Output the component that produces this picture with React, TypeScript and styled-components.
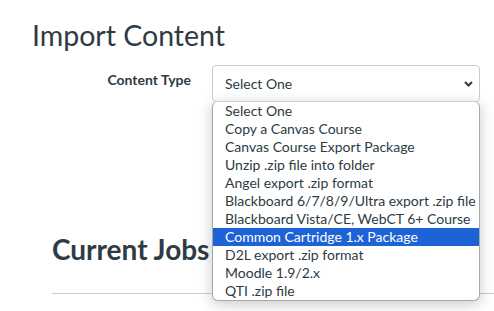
import React from 'react';
import styled, { createGlobalStyle } from 'styled-components';

const GlobalStyle = createGlobalStyle`
  html, body {
    margin: 0;
    padding: 0;
    background: #fff;
    font-family: Lato, "Helvetica Neue", Arial, sans-serif;
    color: #2d3b45;
    overflow: hidden;
  }
`

const Page = styled.div`
  width: 494px;
  height: 311px;
  position: relative;
  overflow: hidden;
`

const Title = styled.h1`
  margin: 0;
  padding: 17px 0 0 32px;
  font-size: 28.5px;
  font-weight: 400;
  line-height: 36px;
  letter-spacing: 0;
`

const FormRow = styled.div`
  display: flex;
  align-items: flex-start;
  margin-top: 12px;
`

const Label = styled.label`
  width: 191px;
  text-align: right;
  font-size: 14px;
  font-weight: 700;
  line-height: 18px;
  padding-top: 6px;
  box-sizing: border-box;
`

const SelectWrap = styled.div`
  position: relative;
  margin-left: 21px;
`

const SelectBox = styled.div`
  width: 268px;
  height: 37px;
  box-sizing: border-box;
  border: 1px solid #c7cdd1;
  border-radius: 4px;
  display: flex;
  align-items: center;
  justify-content: space-between;
  padding: 0 6px 1px 12px;
  font-size: 14px;
`

const Chevron = styled.svg`
  width: 9px;
  height: 6px;
  margin-top: 1px;
`

const Options = styled.ul`
  position: absolute;
  top: 36px;
  left: 0;
  width: 268px;
  margin: 0;
  padding: 0;
  list-style: none;
  background: #fff;
  border: 1px solid #a9a9a9;
  border-top-color: #d0d0d0;
  border-radius: 6px;
  box-sizing: border-box;
  overflow: hidden;
  box-shadow: 0 3px 14px rgba(0, 0, 0, 0.22);
  z-index: 2;
`

const Option = styled.li<{ active?: boolean }>`
  height: 18px;
  line-height: 18px;
  padding-left: 12px;
  font-size: 14px;
  white-space: nowrap;
  background: ${p => (p.active ? '#1d63d6' : 'transparent')};
  color: ${p => (p.active ? '#fff' : '#2d3b45')};
`

const Jobs = styled.section`
  margin: 130px 0 0 52px;
`

const JobsTitle = styled.h2`
  margin: 0;
  font-size: 28px;
  font-weight: 700;
  line-height: 34px;
`

const Rule = styled.hr`
  margin: 27px 0 0 0;
  border: 0;
  border-top: 1px solid #c7cdd1;
`

const options = [
  'Select One',
  'Copy a Canvas Course',
  'Canvas Course Export Package',
  'Unzip .zip file into folder',
  'Angel export .zip format',
  'Blackboard 6/7/8/9/Ultra export .zip file',
  'Blackboard Vista/CE, WebCT 6+ Course',
  'Common Cartridge 1.x Package',
  'D2L export .zip format',
  'Moodle 1.9/2.x',
  'QTI .zip file',
]

export default function App() {
  return (
    <Page>
      <GlobalStyle />
      <Title>Import Content</Title>
      <FormRow>
        <Label>Content Type</Label>
        <SelectWrap>
          <SelectBox>
            <span>Select One</span>
            <Chevron viewBox="0 0 9 6">
              <path d="M1 1 L4.5 4.5 L8 1" fill="none" stroke="#2d3b45" strokeWidth="2" />
            </Chevron>
          </SelectBox>
          <Options>
            {options.map((o, i) => (
              <Option key={o} active={i === 7}>{o}</Option>
            ))}
          </Options>
        </SelectWrap>
      </FormRow>
      <Jobs>
        <JobsTitle>Current Jobs</JobsTitle>
        <Rule />
      </Jobs>
    </Page>
  )
}
